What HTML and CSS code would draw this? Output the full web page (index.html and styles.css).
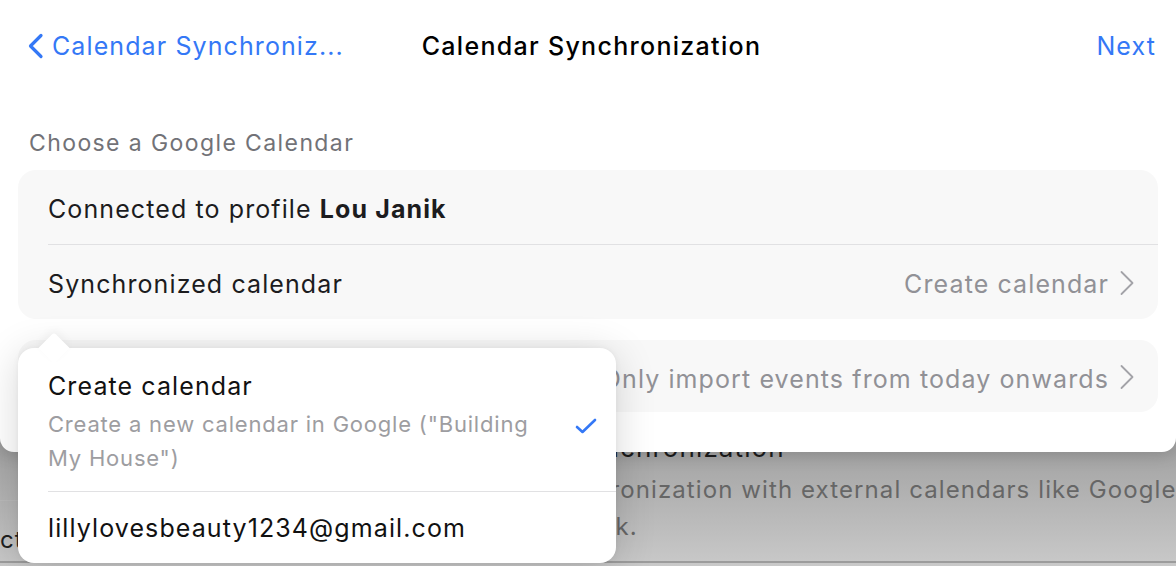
FILE: index.html
```html
<!DOCTYPE html>
<html lang="en">
<head>
<meta charset="utf-8">
<title>Calendar Synchronization</title>
<link rel="stylesheet" href="styles.css">
</head>
<body>
<div class="page">
  <div class="bg-left">
    <div class="bg-divider"></div>
    <div class="bg-item">ct</div>
  </div>
  <div class="bg-detail">
    <div class="bg-title">Synchronization</div>
    <div class="bg-desc">Synchronization with external calendars like Google<br>Outlook.</div>
  </div>
</div>
<div class="bg-bottom-line"></div>

<div class="sheet">
  <header class="nav">
    <div class="nav-back">
      <svg class="back-chevron" width="17" height="26" viewBox="0 0 17 26"><path d="M14 2.5 L3.5 13 L14 23.5" fill="none" stroke="#3478f6" stroke-width="3.2" stroke-linecap="round" stroke-linejoin="round"/></svg>
      <span>Calendar Synchroniz...</span>
    </div>
    <div class="nav-title">Calendar Synchronization</div>
    <div class="nav-next">Next</div>
  </header>
  <main class="content">
    <div class="section-title">Choose a Google Calendar</div>
    <div class="card">
      <div class="row">
        <span>Connected to profile <b>Lou Janik</b></span>
      </div>
      <div class="row-divider"></div>
      <div class="row">
        <span>Synchronized calendar</span>
        <span class="value">Create calendar
          <svg class="chev" width="16" height="26" viewBox="0 0 16 26"><path d="M2.5 2 L13.5 13 L2.5 24" fill="none" stroke="#a3a3a8" stroke-width="1.8" stroke-linecap="round" stroke-linejoin="round"/></svg>
        </span>
      </div>
    </div>
    <div class="card card-single">
      <div class="row">
        <span></span>
        <span class="value">Only import events from today onwards
          <svg class="chev" width="16" height="26" viewBox="0 0 16 26"><path d="M2.5 2 L13.5 13 L2.5 24" fill="none" stroke="#a3a3a8" stroke-width="1.8" stroke-linecap="round" stroke-linejoin="round"/></svg>
        </span>
      </div>
    </div>
  </main>
</div>

<div class="popover">
  <div class="pop-item pop-item-first">
    <div class="pop-text">
      <div class="pop-title">Create calendar</div>
      <div class="pop-sub">Create a new calendar in Google ("Building My House")</div>
    </div>
    <svg class="check" width="22" height="18" viewBox="0 0 22 18"><path d="M2 10 L7.5 15 L20 3" fill="none" stroke="#3478f6" stroke-width="2.6" stroke-linecap="round" stroke-linejoin="round"/></svg>
  </div>
  <div class="pop-divider"></div>
  <div class="pop-item pop-item-last">
    <div class="pop-title">lillylovesbeauty1234@gmail.com</div>
  </div>
</div>
</body>
</html>
```

FILE: styles.css
```css
* { box-sizing: border-box; }

html, body {
  margin: 0;
  padding: 0;
}

body {
  width: 1176px;
  height: 566px;
  overflow: hidden;
  position: relative;
  font-family: Inter, "Liberation Sans", sans-serif;
  letter-spacing: 1.1px;
  background: linear-gradient(to bottom, #a2a2a2 0px, #a4a4a4 452px, #c9c9c9 566px);
  -webkit-font-smoothing: antialiased;
}

/* ---------- background (dimmed) screen ---------- */
.page {
  display: flex;
  height: 561px;
  padding-top: 432px;
}

.bg-left {
  width: 534px;
  flex: none;
  padding-top: 68px;
}

.bg-divider {
  height: 1px;
  background: #b9b9b9;
}

.bg-item {
  margin-top: 23px;
  font-size: 24px;
  line-height: 32px;
  color: #1f1f1f;
}

.bg-detail {
  flex: 1;
  white-space: nowrap;
  overflow: hidden;
}

.bg-title {
  padding-left: 36px;
  font-size: 26px;
  line-height: 32px;
  color: #1c1c1c;
}

.bg-desc {
  margin-top: 7px;
  font-size: 24px;
  line-height: 37px;
  color: #666;
}

.bg-bottom-line {
  height: 2px;
  background: #9c9c9c;
}

/* ---------- sheet ---------- */
.sheet {
  position: absolute;
  top: 0;
  left: 0;
  right: 0;
  height: 452px;
  background: #fff;
  border-radius: 0 0 14px 14px;
  box-shadow: 0 2px 18px rgba(0, 0, 0, 0.18);
}

.nav {
  height: 92px;
  display: grid;
  grid-template-columns: 1fr auto 1fr;
  align-items: center;
  padding: 0 20px 0 27px;
  font-size: 25px;
}

.nav-back {
  display: flex;
  align-items: center;
  gap: 8px;
  color: #3478f6;
}

.nav-title {
  color: #000;
  font-weight: 500;
  letter-spacing: 1.3px;
}

.nav-next {
  justify-self: end;
  color: #3478f6;
}

.content {
  padding: 36px 18px 0 18px;
}

.section-title {
  padding-left: 11px;
  font-size: 23px;
  letter-spacing: 1.4px;
  line-height: 30px;
  color: #727277;
  margin-bottom: 12px;
}

.card {
  background: #f8f8f8;
  border-radius: 18px;
}

.card-single {
  margin-top: 21px;
}

.row {
  height: 74px;
  display: flex;
  align-items: center;
  justify-content: space-between;
  padding: 4px 23px 0 30px;
  font-size: 25px;
  color: #1c1c1e;
}

.card-single .row {
  height: 72px;
  padding-top: 5px;
}

.row b {
  font-weight: 700;
}

.row-divider {
  height: 1px;
  margin-left: 30px;
  background: #e1e1e3;
}

.value {
  display: flex;
  align-items: center;
  gap: 10px;
  color: #919196;
}

.chev {
  margin-top: -3px;
}

/* ---------- popover ---------- */
.popover {
  position: absolute;
  left: 18px;
  top: 348px;
  width: 598px;
  height: 215px;
  background: #fff;
  border-radius: 16px;
  box-shadow: 0 6px 40px rgba(0, 0, 0, 0.16), 0 0 6px rgba(0, 0, 0, 0.05);
}

.popover::before {
  content: "";
  position: absolute;
  left: 25px;
  top: -11px;
  width: 22px;
  height: 22px;
  background: #fff;
  transform: rotate(45deg);
  border-radius: 3px 0 0 0;
  box-shadow: -3px -3px 8px rgba(0, 0, 0, 0.04);
}

.pop-item {
  position: relative;
  display: flex;
  align-items: center;
  padding: 0 19px 0 30px;
}

.pop-item-first {
  padding-top: 23px;
  padding-bottom: 16px;
}

.pop-text {
  width: 510px;
}

.pop-title {
  font-size: 25px;
  line-height: 30px;
  color: #111;
}

.pop-sub {
  margin-top: 6px;
  font-size: 22px;
  letter-spacing: 0.8px;
  line-height: 34px;
  color: #9d9da1;
}

.check {
  margin-left: auto;
  margin-top: 6px;
}

.pop-divider {
  height: 1px;
  margin-left: 30px;
  background: #e1e1e3;
}

.pop-item-last {
  height: 71px;
}
```
